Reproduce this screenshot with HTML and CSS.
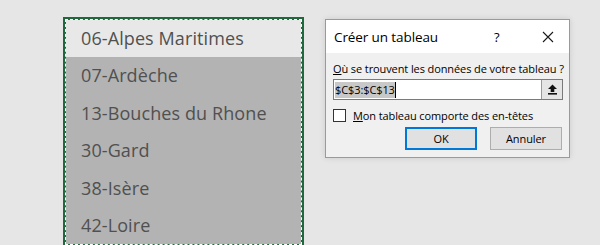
FILE: index.html
```html
<!DOCTYPE html>
<html lang="fr">
<head>
    <meta charset="UTF-8">
    <title>Créer un tableau</title>
    <link rel="stylesheet" href="styles.css">
</head>
<body>
    <div class="screen">
        <div class="sheet">
            <div class="ants">
                <div class="cell active">06-Alpes Maritimes</div>
                <div class="cell">07-Ardèche</div>
                <div class="cell">13-Bouches du Rhone</div>
                <div class="cell">30-Gard</div>
                <div class="cell">38-Isère</div>
                <div class="cell">42-Loire</div>
            </div>
        </div>

        <div class="dialog">
            <div class="titlebar">
                <span class="title">Créer un tableau</span>
                <span class="help">?</span>
                <span class="close">
                    <svg width="12" height="12" viewBox="0 0 12 12"><path d="M1 1L11 11M11 1L1 11" stroke="#1a1a1a" stroke-width="1.1" fill="none"/></svg>
                </span>
            </div>
            <div class="body">
                <div class="label"><u>O</u>ù se trouvent les données de votre tableau ?</div>
                <div class="range">
                    <div class="range-text"><span class="sel">$C$3:$C$13</span><span class="caret"></span></div>
                    <div class="range-btn">
                        <svg width="11" height="11" viewBox="0 0 11 11"><path d="M5.5 0.5L10 5H7.3V8H3.7V5H1Z" fill="#111"/><rect x="1" y="9" width="9" height="1.6" fill="#111"/></svg>
                    </div>
                </div>
                <div class="check-row">
                    <span class="box"></span>
                    <span><u>M</u>on tableau comporte des en-têtes</span>
                </div>
                <div class="buttons">
                    <div class="btn default">OK</div>
                    <div class="btn">Annuler</div>
                </div>
            </div>
        </div>
    </div>
</body>
</html>
```

FILE: styles.css
```css
* {
    margin: 0;
    padding: 0;
    box-sizing: border-box;
}

body {
    background: #e6e6e6;
    font-family: 'Open Sans', 'Noto Sans', sans-serif;
    overflow: hidden;
}

.screen {
    display: flex;
    align-items: flex-start;
    padding: 17px 0 0 63px;
    height: 245px;
}

/* cellules sélectionnées */
.sheet {
    width: 241px;
    border: 2px solid #1d6b3b;
}

.ants {
    border: 1px dashed #fff;
    background: #1d6b3b;
}

.cell {
    height: 37.4px;
    line-height: 37px;
    padding-left: 15px;
    font-size: 18px;
    letter-spacing: 0.1px;
    color: #505050;
    background: #b3b3b3;
    white-space: nowrap;
}

.cell.active {
    background: #e8e8e8;
}

/* boîte de dialogue */
.dialog {
    margin: 2px 0 0 21px;
    width: 245px;
    border: 1px solid #9a9a9a;
    background: #f0f0f0;
    box-shadow: 0 0 6px rgba(0, 0, 0, 0.12);
    font-size: 11px;
    letter-spacing: -0.1px;
    color: #000;
    white-space: nowrap;
}

.titlebar {
    display: flex;
    align-items: center;
    height: 33px;
    background: #fff;
    padding-left: 8px;
}

.title {
    font-size: 13.5px;
    flex: 1;
}

.help {
    font-size: 13px;
    width: 48px;
}

.close {
    width: 27px;
    display: flex;
}

.body {
    padding: 8px 6px 7px 7px;
}

.label {
    margin-bottom: 3px;
}

.range {
    display: flex;
    height: 21px;
    border: 1px solid #7a7a7a;
    background: #fff;
}

.range-text {
    flex: 1;
    display: flex;
    align-items: center;
    padding-left: 1px;
}

.sel {
    background: #c8c8c8;
    line-height: 16px;
}

.caret {
    width: 1px;
    height: 16px;
    background: #000;
}

.range-btn {
    width: 21px;
    border-left: 1px solid #9a9a9a;
    background: #e5e5e5;
    display: flex;
    align-items: center;
    justify-content: center;
}

.check-row {
    display: flex;
    align-items: center;
    gap: 7px;
    margin-top: 8px;
}

.box {
    width: 13px;
    height: 13px;
    border: 1px solid #333;
    background: #fff;
}

.buttons {
    display: flex;
    justify-content: flex-end;
    gap: 13px;
    margin-top: 4px;
    padding-right: 1px;
}

.btn {
    width: 72px;
    height: 23px;
    line-height: 21px;
    text-align: center;
    background: #e1e1e1;
    border: 1px solid #adadad;
}

.btn.default {
    border: 2px solid #0078d7;
    line-height: 19px;
}
```
